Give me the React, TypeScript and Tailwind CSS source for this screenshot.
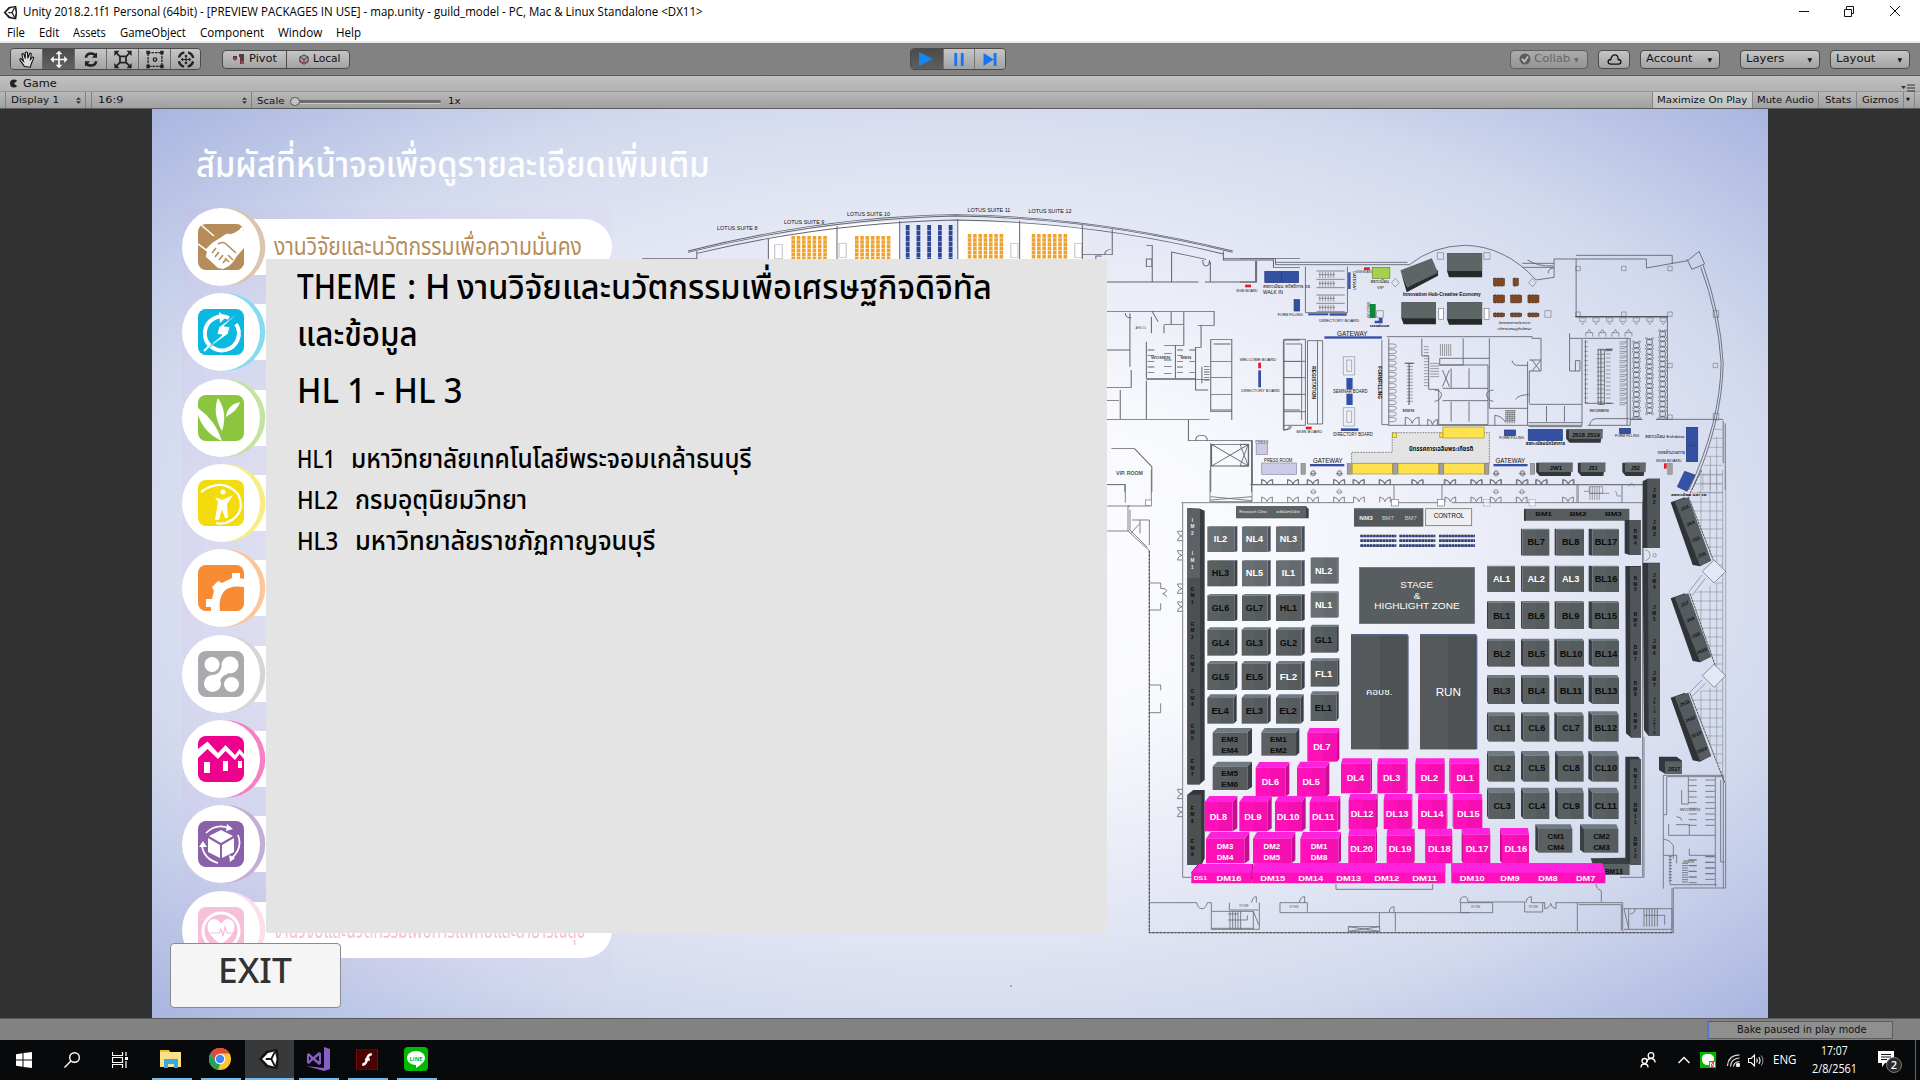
import React, { useLayoutEffect, useRef, useState } from "react";

/* Text squeezed or stretched to a given width. */
function Fit({ w, className = "", children }: { w: number; className?: string; children: string }) {
  const ref = useRef<HTMLSpanElement>(null);
  const [k, setK] = useState(1);
  useLayoutEffect(() => {
    if (ref.current && ref.current.offsetWidth) setK(w / ref.current.offsetWidth);
  }, [w, children]);
  return (
    <span className={"inline-block shrink-0 text-left " + className} style={{ width: w }}>
      <span ref={ref} className="inline-block origin-left whitespace-pre" style={{ transform: `scaleX(${k})` }}>
        {children}
      </span>
    </span>
  );
}

const UnityMark = ({ className, dark = "#222", light = "#fff" }: { className: string; dark?: string; light?: string }) => (
  <svg viewBox="0 0 24 24" className={className}>
    <path d="M1 12 L9 3 L21 1 Q24 12 21 23 L9 21 Z" fill={dark} />
    <path d="M4.500 12L11 5.500L18.500 3.500L20.300 12L18.500 20.500L11 18.500Z" fill={light} />
    <path d="M8.500 12h6M14.500 12l4-8M14.500 12l4 8" stroke={dark} strokeWidth="2" />
  </svg>
);

const MENU: [string, number, string][] = [
  ["File", 18, "w-[32px]"], ["Edit", 20, "w-[34px]"], ["Assets", 33, "w-[47px]"], ["GameObject", 66, "w-[80px]"],
  ["Component", 64, "w-[78px]"], ["Window", 44, "w-[58px]"], ["Help", 25, "w-[40px]"],
];

function TitleBar() {
  return (
    <div className="flex h-[43px] shrink-0 flex-col border-b-2 border-[#e9ecec] bg-white font-['Open_Sans',sans-serif] text-[12px] text-black">
      <div className="flex h-[24px] shrink-0 items-center">
        <UnityMark className="ml-[3px] mr-[5px] h-[15px] w-[15px]" />
        <Fit w={680}>{"Unity 2018.2.1f1 Personal (64bit) - [PREVIEW PACKAGES IN USE] - map.unity - guild_model - PC, Mac & Linux Standalone <DX11>"}</Fit>
        <svg viewBox="0 0 110 20" className="ml-auto mr-5 h-5 w-[110px]" fill="none" stroke="#111">
          <path d="M9 9.500h10M54.500 7.500h7v7h-7zM56.500 7v-2.500h7v7h-2.500M100 4l10 10M110 4l-10 10" />
        </svg>
      </div>
      <div className="flex h-[18px] shrink-0 items-center pl-[7px]">
        {MENU.map(([t, w, c]) => (
          <div key={t} className={"shrink-0 " + c}><Fit w={w}>{t}</Fit></div>
        ))}
      </div>
    </div>
  );
}

const BTN = "flex items-center border border-[#4b4b4b] bg-linear-to-b from-[#c6c6c6] to-[#a2a2a2]";

const TOOLS = [
  <path key="0" d="M8 19 L3 12 Q2 10 4 10 L7 13 L5 5 Q6 3 7.500 5 L9 10 L9 3 Q10 1.500 11.500 3 L12 9.500 L14 4 Q15.500 3 16 4.500 L15 11 L17.500 8 Q19 8 18.500 10 L15.500 17 L15 20Z" fill="#ddd" stroke="#111" strokeWidth="1.200" />,
  <path key="1" d="M11 1l4 4h-3v5h5V7l4 4-4 4v-3h-5v5h3l-4 4-4-4h3v-5H5v3l-4-4 4-4v3h5V5H7z" fill="#f5f5f5" />,
  <g key="2" fill="none" stroke="#222" strokeWidth="3"><path d="M5 9q1-5 6-5 4 0 6 3M17 13q-1 5-6 5-4 0-6-3" /><path d="M18 3v6h-6zM4 19v-6h6z" fill="#222" stroke="none" /></g>,
  <g key="3" stroke="#222" fill="none" strokeWidth="2"><path d="M7.500 7.500h7v7h-7zM7 7L3 3M15 7l4-4M7 15l-4 4M15 15l4 4" /><path d="M1 1h6L1 7zM21 1h-6l6 6zM1 21h6l-6-6zM21 21h-6l6-6z" fill="#222" stroke="none" /></g>,
  <g key="4" stroke="#222" fill="none" strokeWidth="1.500"><path d="M3 3h16v16H3z" strokeDasharray="3 1" /><circle cx="11" cy="11" r="2" /><path d="M1 1h4v4H1zM17 1h4v4h-4zM1 17h4v4H1zM17 17h4v4h-4z" fill="#222" stroke="none" /></g>,
  <g key="5" stroke="#222" fill="none"><circle cx="11" cy="11" r="8.500" strokeWidth="2.800" strokeDasharray="9 4.350" strokeDashoffset="-2.200" /><path d="M11 6v10M6 11h10M9.500 7.500L11 6l1.500 1.500M9.500 14.500L11 16l1.500-1.500M7.500 9.500L6 11l1.500 1.500M14.500 9.500L16 11l-1.500 1.500" strokeWidth="1.300" /></g>,
];

function Toolbar() {
  return (
    <div className="flex h-[33px] shrink-0 items-center border-b border-[#5c5c5c] bg-[#828282] font-['DejaVu_Sans',sans-serif] text-[11px] text-[#111]">
      <div className="ml-[10px] flex h-[22px] overflow-hidden rounded border border-[#4b4b4b]">
        {TOOLS.map((t, i) => (
          <div key={i} className={"flex w-8 items-center justify-center border-r border-[#6a6a6a] last:w-[29px] last:border-0 " + (i === 1 ? "bg-linear-to-b from-[#4b4b4b] to-[#626262]" : "bg-linear-to-b from-[#c6c6c6] to-[#a2a2a2]")}>
            <svg viewBox="0 0 22 22" className="h-[19px] w-[20px]">{t}</svg>
          </div>
        ))}
      </div>
      <div className={BTN + " ml-[21px] h-[19px] w-[65px] rounded-l pl-[10px]"}>
        <svg viewBox="0 0 12 12" className="mr-1 h-3 w-3"><path d="M0 3h4v3l-2 2-2-2zM6 1h5v10H7V4H6z" fill="#5b3b42" /><path d="M1 5h2v2H1zM8 8h3v3H8z" fill="#c33" /></svg>
        <Fit w={28}>Pivot</Fit>
      </div>
      <div className={BTN + " -ml-px h-[19px] w-[64px] rounded-r pl-[12px]"}>
        <svg viewBox="0 0 12 12" className="mr-1 h-[11px] w-[10px]"><path d="M6 .5l5 2.500v6l-5 2.500-5-2.500V3zM1 3l5 2.500L11 3M6 5.500v6" fill="#999" stroke="#333" /><path d="M1 8l5 3 5-3" fill="none" stroke="#b33" strokeWidth="1.500" /></svg>
        <Fit w={28}>Local</Fit>
      </div>
      <div className="ml-[560px] flex h-[22px] overflow-hidden rounded border border-[#4b4b4b]">
        <div className="flex w-8 items-center justify-center bg-linear-to-b from-[#4b4b4b] to-[#5f5f5f] pr-[2px]"><svg viewBox="0 0 16 14" className="h-[14px] w-4"><path d="M1 0l14 7-14 7z" fill="#1686f5" /></svg></div>
        <div className="flex w-8 items-center justify-center border-x border-[#777] bg-linear-to-b from-[#c6c6c6] to-[#a2a2a2] pr-px"><svg viewBox="0 0 12 14" className="h-[13px] w-3"><path d="M1 0h3v14H1zM8 0h3v14H8z" fill="#1673f5" /></svg></div>
        <div className="flex w-[30px] items-center justify-center bg-linear-to-b from-[#c6c6c6] to-[#a2a2a2]"><svg viewBox="0 0 14 14" className="h-[13px] w-[14px]"><path d="M0 0l11 7-11 7zM11 0h3v14h-3z" fill="#1673f5" /></svg></div>
      </div>
      <div className="ml-auto mr-[10px] flex">
        <div className={BTN + " h-[19px] w-[78px] rounded pl-[8px] text-[#555] opacity-60"}>
          <svg viewBox="0 0 12 12" className="mr-[3px] h-3 w-3"><circle cx="6" cy="6" r="5.500" fill="#444" /><path d="M3 6l2.500 2.500L9 3.500" fill="none" stroke="#eee" strokeWidth="1.800" /></svg>
          <Fit w={36}>Collab</Fit><span className="ml-[4px] text-[6px]">▼</span>
        </div>
        <div className={BTN + " ml-[10px] h-[19px] w-8 justify-center rounded"}><svg viewBox="0 0 16 12" className="h-[11px] w-[15px]"><path d="M4 11Q1 11 1 8.500T4 6Q5 1 8.500 1T12 6Q15 6 15 8.500T12 11z" fill="none" stroke="#111" strokeWidth="1.400" /></svg></div>
        {([["Account", 46, "ml-[10px]"], ["Layers", 38, "ml-[20px]"], ["Layout", 39, "ml-[10px]"]] as [string, number, string][]).map(([t, w, c]) => (
          <div key={t} className={BTN + " h-[19px] w-20 justify-between rounded pl-[5px] pr-[7px] " + c}><Fit w={w}>{t}</Fit><span className="text-[6px]">▼</span></div>
        ))}
      </div>
    </div>
  );
}

const Updown = () => <svg viewBox="0 0 6 8" className="h-[7px] w-[5px]"><path d="M3 0l3 3H0zM3 8L0 5h6z" fill="#333" /></svg>;

function GameTabs() {
  return (
    <div className="shrink-0 font-['DejaVu_Sans',sans-serif] text-[#111]">
      <div className="flex h-4 items-center border-b border-[#989898] bg-linear-to-b from-[#c0c0c0] to-[#b2b2b2] pl-[10px] text-[11px]">
        <svg viewBox="0 0 10 10" className="mr-[5px] h-[9px] w-2"><path d="M9 1.500L5 5l4 3.500Q7 10 5 10A5 5 0 0 1 5 0Q7 0 9 1.500z" fill="#222" /></svg>
        <Fit w={34} className="mt-[2px]">Game</Fit>
        <svg viewBox="0 0 14 8" className="ml-auto mr-[5px] mt-2 h-2 w-[14px]"><path d="M0 2h5L2.500 5zM6 .5h8v1H6zM6 3.500h8v1H6zM6 6.500h8v1H6z" fill="#333" /></svg>
      </div>
      <div className="flex h-[17px] items-center border-b border-[#5c5c5c] bg-linear-to-b from-[#b8b8b8] to-[#a0a0a0] text-[9.500px]">
        <div className="ml-[5px] flex h-full w-[81px] items-center justify-between border-x border-[#808080] px-[5px] pr-[4px]"><Fit w={48}>Display 1</Fit><Updown /></div>
        <div className="ml-[5px] flex h-full w-[161px] items-center justify-between border-x border-[#808080] pl-[6px] pr-[4px]"><Fit w={25}>16:9</Fit><Updown /></div>
        <Fit w={28} className="ml-[5px] mt-[3px]">Scale</Fit>
        <div className="ml-[5px] mt-[3px] h-[9px] w-[10px] rounded-full border border-[#555] bg-[#c4c4c4]" />
        <div className="mt-[3px] h-1 w-[141px] rounded-r border-b border-[#ccc] bg-[#6c6c6c]" />
        <Fit w={13} className="ml-[7px] mt-[3px]">1x</Fit>
        <div className="ml-auto flex h-full items-center">
          <div className="flex h-full w-[101px] items-center border-x border-[#858585] bg-linear-to-b from-[#d0d0d0] to-[#c0c0c0] pl-1"><Fit w={90}>Maximize On Play</Fit></div>
          <div className="flex h-full w-[66px] items-center border-r border-[#858585] pl-[4px]"><Fit w={57}>Mute Audio</Fit></div>
          <div className="flex h-full w-[38px] items-center border-r border-[#858585] pl-[6px]"><Fit w={26}>Stats</Fit></div>
          <div className="flex h-full w-[47px] items-center border-r border-[#858585] pl-[5px]"><Fit w={37}>Gizmos</Fit></div>
          <div className="mr-[5px] flex h-full w-[11px] items-center border-r border-[#858585] pl-[2px] text-[5px]">▼</div>
        </div>
      </div>
    </div>
  );
}

/* ---- Floor plan ---- */

type LabelProps = { x: number; y: number; w: number; s?: number; f?: string; b?: boolean; children: string; rot?: number };
const L = ({ x, y, w, s = 20, f = "#111", b = false, rot, children }: LabelProps) => (
  <text x={x} y={y} fontSize={s} fill={f} textAnchor="middle" textLength={w} lengthAdjust="spacingAndGlyphs" fontWeight={b ? 700 : 400}
    transform={rot ? `rotate(${rot} ${x} ${y})` : undefined}>{children}</text>
);

/* A booth block: front face, a lid of height t, and a side face of width |d| (right when positive). */
type BoothT = [label: string, x0: number, y0: number, x1: number, y1: number, tone: string, t?: number, d?: number];
const FRONT: Record<string, string> = { k: "#5a5f62", w: "#5a5f62", l: "#6a6f73", p: "#ff10b8" };
const LID: Record<string, string> = { k: "#6f7b83", w: "#6f7b83", l: "#757c84", p: "#ff22dc" };
const SIDE: Record<string, string> = { k: "#3a3f46", w: "#3a3f46", l: "#464c5e", p: "#c80c94" };
const textWidth = (s: string) => (s.length === 4 ? 68 : 72);
function Booth({ v }: { v: BoothT }) {
  const [label, x0, y0, x1, y1, c, t = 5, d = 9] = v;
  const fx0 = d < 0 ? x0 - d : x0;
  const fx1 = d > 0 ? x1 - d : x1;
  const fy = y0 + t;
  const lines = label.split("/");
  const big = lines.length === 1;
  const cx = (fx0 + fx1) / 2 - (d > 0 ? 1 : -1);
  const cy = (fy + y1) / 2;
  return (
    <g>
      {d > 0
        ? <path d={`M${fx1} ${fy}L${x1} ${y0}V${y1 - Math.min(t, 9)}L${fx1} ${y1}z`} fill={SIDE[c]} />
        : <path d={`M${fx0} ${fy}L${x0} ${y0}V${y1 - Math.min(t, 9)}L${fx0} ${y1}z`} fill={SIDE[c]} />}
      <path d={d > 0 ? `M${x0} ${fy}L${x0 + d} ${y0}H${x1}L${fx1} ${fy}z` : `M${fx0} ${fy}L${x0} ${y0}H${x1 + d / 2}L${x1} ${fy}z`} fill={LID[c]} />
      <rect x={fx0} y={fy} width={fx1 - fx0} height={y1 - fy} fill={FRONT[c]} />
      <rect x={(fx0 + fx1) / 2} y={fy} width={(fx1 - fx0) / 2} height={y1 - fy} fill="#000" opacity=".04" />
      {lines.map((s, i) => (
        <text key={s} x={cx} y={big ? cy + 9 : cy - 6 + i * 33} fontSize={big ? 27 : 20} fontWeight="700" textAnchor="middle"
          textLength={!big ? 50 : s.length === 3 ? (s[0] === "I" ? 40 : 52) : textWidth(s)} lengthAdjust="spacingAndGlyphs"
          fill={c === "k" ? "#0c0c0c" : "#fff"}>{s}</text>
      ))}
    </g>
  );
}

const NW: BoothT[] = [
  ["IL2", 322, 168, 412, 246, "l", 2], ["NL4", 426, 168, 512, 246, "l", 2], ["NL3", 528, 168, 614, 246, "l", 2],
  ["HL3", 322, 270, 412, 349, "k", 2], ["NL5", 426, 270, 512, 349, "l", 2], ["IL1", 528, 270, 614, 349, "l", 2],
  ["NL2", 632, 262, 716, 341, "l", 2, 4], ["NL1", 632, 364, 716, 443, "l", 3, 4],
  ["GL6", 322, 372, 412, 453, "k", 4], ["GL7", 426, 372, 512, 453, "k", 4], ["HL1", 528, 372, 614, 453, "k", 4],
  ["GL4", 322, 472, 412, 557, "k", 7], ["GL3", 425, 472, 512, 557, "k", 7], ["GL2", 528, 472, 614, 557, "k", 7], ["GL1", 632, 464, 716, 548, "k", 7, 5],
  ["GL5", 322, 573, 412, 660, "k", 8], ["EL5", 425, 573, 512, 660, "k", 8], ["FL2", 528, 573, 614, 660, "w", 8], ["FL1", 632, 565, 718, 650, "w", 7, 6],
  ["EL4", 322, 673, 410, 761, "k", 11], ["EL3", 425, 673, 512, 761, "k", 11], ["EL2", 528, 673, 611, 761, "k", 11], ["EL1", 632, 664, 716, 753, "k", 9, 6],
];
const SW: BoothT[] = [
  ["EM3/EM4", 338, 54, 456, 137, "k", 13, 14], ["EM1/EM2", 484, 54, 598, 137, "k", 13, 10], ["EM5/EM6", 338, 155, 456, 240, "k", 14, 14],
  ["DL7", 622, 54, 718, 155, "p", 14, 7], ["DL6", 467, 156, 568, 260, "p", 17, 11], ["DL5", 591, 155, 688, 260, "p", 17, 10],
  ["DL4", 723, 145, 816, 250, "p", 16, 5], ["DL3", 832, 145, 923, 250, "p", 16, 3], ["DL2", 946, 145, 1034, 250, "p", 16, 2], ["DL1", 1048, 145, 1138, 250, "p", 16, -3],
  ["DL8", 314, 258, 412, 364, "p", 18, 14], ["DL9", 418, 258, 515, 364, "p", 18, 13], ["DL10", 525, 258, 617, 364, "p", 18, 11], ["DL11", 629, 258, 721, 364, "p", 18, 8],
  ["DL12", 746, 252, 833, 357, "p", 18, 5], ["DL13", 851, 252, 937, 357, "p", 18, 3], ["DL14", 954, 252, 1042, 357, "p", 18, 2], ["DL15", 1058, 252, 1147, 357, "p", 18, -3],
  ["DM3/DM4", 318, 366, 448, 460, "p", 20, 14], ["DM2/DM5", 459, 366, 586, 460, "p", 20, 12], ["DM1/DM8", 601, 366, 723, 460, "p", 20, 8],
  ["DL20", 745, 356, 831, 460, "p", 20, 4], ["DL19", 860, 356, 944, 460, "p", 20, 2], ["DL18", 975, 356, 1057, 460, "p", 20, -2], ["DL17", 1085, 354, 1171, 460, "p", 20, -4], ["DL16", 1200, 354, 1287, 460, "p", 20, -6],
];
const NE: BoothT[] = [
  ["BL7", 243, 176, 328, 257, "k", 2, -4], ["BL8", 344, 176, 432, 257, "k", 2, -6], ["BL17", 446, 176, 537, 257, "k", 2, -11],
  ["AL1", 141, 287, 225, 366, "w", 2, -2], ["AL2", 243, 287, 328, 366, "w", 2, -4], ["AL3", 344, 287, 432, 366, "w", 2, -6], ["BL16", 446, 287, 537, 366, "k", 2, -11],
  ["BL1", 141, 393, 225, 477, "k", 4, -3], ["BL6", 243, 393, 328, 477, "k", 4, -5], ["BL9", 344, 393, 432, 477, "k", 4, -6], ["BL15", 446, 393, 537, 477, "k", 4, -10],
  ["BL2", 141, 506, 225, 590, "k", 7, -3], ["BL5", 243, 506, 328, 590, "k", 7, -6], ["BL10", 343, 506, 432, 590, "k", 7, -9], ["BL14", 446, 506, 537, 590, "k", 7, -12],
  ["BL3", 141, 615, 225, 702, "k", 9, -3], ["BL4", 243, 615, 328, 702, "k", 9, -6], ["BL11", 343, 615, 432, 702, "k", 9, -9], ["BL13", 446, 615, 537, 702, "k", 9, -12],
];
const SE: BoothT[] = [
  ["CL1", 141, 7, 225, 95, "k", 9, -5], ["CL6", 243, 7, 328, 95, "k", 9, -8], ["CL7", 343, 7, 431, 95, "k", 9, -10], ["BL12", 445, 4, 536, 95, "k", 10, -12],
  ["CL2", 141, 123, 225, 215, "k", 13, -5], ["CL5", 243, 123, 328, 215, "k", 13, -8], ["CL8", 345, 123, 431, 215, "k", 13, -9], ["CL10", 445, 123, 536, 215, "k", 13, -12],
  ["CL3", 141, 233, 225, 327, "k", 14, -5], ["CL4", 243, 233, 328, 327, "k", 14, -8], ["CL9", 345, 233, 431, 327, "k", 14, -9], ["CL11", 445, 233, 536, 327, "k", 14, -12],
  ["CM1/CM4", 286, 343, 397, 428, "k", 14, -10], ["CM2/CM3", 420, 343, 535, 428, "k", 14, -12],
];

const VLabel = ({ x, y, t, step = 21, s = 14, f = "#0c0c0c" }: { x: number; y: number; t: string; step?: number; s?: number; f?: string }) => (
  <>{t.split("").map((c, i) => <text key={i} x={x} y={y + i * step} fontSize={s} fontWeight="700" textAnchor="middle" fill={f}>{c}</text>)}</>
);

const range = (n: number) => Array.from({ length: n }, (_, i) => i);

const Doors = ({ x, y }: { x: number; y: number }) => (
  <path d={`M${x - 17} ${y}v-16q14 2 16 14q2-12 16-14v16`} fill="none" />
);

/* North side, west half: the suites behind the dialog and the VIP rooms. */
function SuitesPlan() {
  return (
    <g transform="translate(640 190) scale(.4209 .33333)">
      <path d="M305 145Q380 118 466 108Q540 96 617 93V210H305zM755 93Q900 95 1051 113V210H755z" fill="#fff" />
      <g fill="none" stroke="#62656f" strokeWidth="2.400">
        <path d="M114 187Q440 85 750 78Q1080 84 1408 187M114 183Q440 79 750 74Q1080 80 1408 183M135 190Q440 98 750 90Q1080 96 1386 192M5 206H135V184M305 145V210M468 108V210M617 93V210M755 88V210M902 92V210M1051 106V210" />
        <path d="M1051 194H1122V118M1104 194q0-14 14-16M1083 210v-12h14M1203 166h14v110M1203 207h13v23h-13zM1108 276H1327M1342 276H1465V213M1263 276V186L1345 208M1337 210q0 18 8 18t8-18M1355 215V276M1386 184V210H1505V232H1568M1386 205H1568M1108 364H1364V406H1325M1164 370V530M1153 370q0 14 14 14M1245 406V430M1262 366v38H1292V366M1245 404h48M1333 406V472M1292 406V466H1245M1215 430V380M1217 365l14 30M1203 455V565H1320V472h14M1203 569H1353M1108 480H1164M1108 592H1167V540M1141 600V688M1203 572V688M1108 688H1353M1320 565V600H1350M1272 466V565M1108 632h30M1120 776H1175L1216 830V905M1108 884H1152V905M1303 690V752H1453V905M1356 760V905M1358 763h88v65h-88zM1358 763l88 65M1446 763l-88 65M1450 884H1568M1320 752q0-16 14-16q14 0 14 16M1356 448h50v242M1356 448V665H1406M1363 462h40M1356 514h50M1356 563h50M1356 613h50M1356 660h50M1530 450h38M1530 450V720q20-2 16-12M1530 514h38M1530 563h38M1530 613h38M1530 660h38" />
        <path d="M1335 530v50M1340 530h13M1340 538h13M1340 546h13M1340 554h13M1340 562h13M1340 570h13M1206 480h16M1206 497h16M1206 514h16M1206 531h16M1206 548h16M1245 490h18M1245 510h18M1245 530h18M1245 550h18M1276 480h14M1276 497h14M1276 514h14M1276 531h14M1276 548h14M1305 480h14M1305 514h14M1305 548h14" />
        <rect x="320" y="164" width="18" height="42" opacity=".4" /><rect x="473" y="160" width="17" height="42" opacity=".4" /><rect x="881" y="160" width="17" height="42" opacity=".4" /><rect x="1033" y="160" width="17" height="42" opacity=".4" />
      </g>
      <g stroke="#f0a12c" strokeWidth="8.500" strokeDasharray="11 1.500">
        {[364, 515, 783, 935].map((x) => range(7).map((i) => <path key={x + i} d={`M${x + i * 12.600} ${x < 600 ? 138 : 132}V208`} />))}
      </g>
      <g stroke="#2c4796" strokeWidth="9" strokeDasharray="15 1.500">{range(5).map((i) => <path key={i} d={`M${636 + i * 25.500} 105V208`} />)}</g>
      <L x={231} y={121} w={96} s={18}>LOTUS SUITE 8</L><L x={390} y={103} w={96} s={18}>LOTUS SUITE 9</L><L x={543} y={79} w={102} s={18}>LOTUS SUITE 10</L>
      <L x={829} y={67} w={102} s={18}>LOTUS SUITE 11</L><L x={974} y={68} w={102} s={18}>LOTUS SUITE 12</L>
      <L x={1163} y={854} w={64} s={14} b f="#555">VIP. ROOM</L>
      <L x={1237} y={506} w={46} s={13} b f="#555">WOMEN</L><L x={1297} y={506} w={26} s={13} b f="#555">MEN</L>
      <L x={1190} y={418} w={26} s={8} f="#555">AHU 01</L>
    </g>
  );
}

/* North side, east half: foyer, registration, gateways and the restaurant. */
function FoyerPlan() {
  const blue = "#3450a3";
  return (
    <g transform="translate(1240 190) scale(.3444 .33333)">
      <g fill="none" stroke="#62656f" strokeWidth="2.600">
        <path d="M0 206H103V224H492Q560 168 652 166Q770 168 860 270L912 262V207H1180V234L1300 212L1333 184L1349 222L1312 238L1298 208M103 217H486M820 220H912M820 232H912M1345 226Q1395 370 1403 520Q1400 700 1312 900M1338 232Q1388 370 1397 520Q1394 700 1303 900M976 207V380H1241V688H1403M976 196H1255V222" />
        <path d="M45 213V276H0M190 230V368H312V230M126 450V720q20-2 16-12M126 448H190V706H126M133 462h46V690M126 514h64M126 563h64M126 613h64M126 665h64M196 452h44V702H196zM225 452V702M412 450V704H432V445M426 440H848V445H874V543H840V640M840 510H874M848 510l24 33M874 510l-26 33M430 706H835M528 445V498H548V598H577V704M724 445V655H835M724 505H580V525H648V445M577 525H720V704H577M588 595H720M588 632H720M613 535V595M665 535V595M613 635V695M665 635V695M588 540l20 50M608 540l-20 50M835 515V706H993V445H957M957 430V543H987V512h-13v31M840 643H993M890 648V695M942 648V695M838 698H993M838 710H993M995 445H1133V706H1010M1003 450V640H1085M1040 478h18v165h-18zM1060 478h20v4h-20M1124 445V706M1403 692V820M1409 700V900" />
        <path d="M565 600q20 2 20 14q-2 18-20 20M736 600q-20 2-20 14q2 18 20 20M790 512q4 16 20 14h26M800 628q10-14 38-14M480 706v-24q16 2 20 18q4-16 20-18v24M545 706v-18q12 2 14 16q2-14 14-16v18M740 706v-30q20 2 30 20M1015 706q4-20 20-20h96" />
        <path d="M300 500h33v55h-33zM310 510h14v34h-14zM300 653h33v55h-33zM310 663h14v34h-14z" opacity=".5" />
        <path d="M573 188h18v20h-18zM708 188h18v20h-18zM396 362h20v20h-20zM885 362h18v20h-18zM1108 229h13v13h-13zM975 229h13v13h-13zM1242 229h13v13h-13zM975 366h13v13h-13zM1108 366h13v13h-13zM1242 366h13v13h-13zM1374 362h16v20h-16zM1242 520h13v13h-13zM1374 520h13v13h-13zM1242 675h13v13h-13zM1374 670h16v20h-16zM451 265l11 13-11 13-11-13zM849 265l11 13-11 13-11-13z" opacity=".6" />
        <path d="M36 884H1170M0 752H36V884M0 763h24v65H0M0 763l24 65M24 763l-24 65M835 210q30 20 74 18M895 250q0-14 14-16" />
        {[80, 155, 212, 289, 345, 421, 516, 610, 688, 744, 821, 877, 955].map((x) => <Doors key={x} x={x} y={885} />)}
        {[212, 289, 744, 821].map((x) => <path key={x} d={`M${x - 9} 852h18M${x - 6} 852q0-10 6-10t6 10q0 6-6 6t-6-6`} opacity=".7" />)}
      </g>
      {/* staircases and sanitary rows */}
      <g stroke="#555" strokeWidth="1.600" fill="none">
        {[243, 268, 293, 315, 340, 365].map((y) => <path key={y} d={`M222 ${y}h82`} strokeWidth="3" stroke="#888" />)}
        {[254, 280, 325, 352].map((y) => <path key={y} d={`M228 ${y}h48M232 ${y - 8}v18M240 ${y - 8}v18M248 ${y - 8}v18M256 ${y - 8}v18M264 ${y - 8}v18M272 ${y - 8}v18`} />)}
        {range(14).map((i) => <path key={i} d={`M432 ${462 + i * 17}h12q10 0 10 6t-10 6h-12M534 ${470 + i * 9}h14M1000 ${456 + i * 14}h10M1102 ${456 + i * 14}h20l-6 6h-14`} />)}
        {range(13).map((i) => <path key={i} d={`M484 ${520 + i * 9.500}h18M1036 ${480 + i * 13}h22M1062 ${480 + i * 12}h14`} />)}
        <path d="M491 520V645M1048 478V645M478 520h28M1062 478h20M1062 640h16" strokeWidth="3" />
        {range(6).map((i) => <path key={i} d={`M${582 + i * 6} 462v36M552 ${520 + i * 8}h26M770 ${662 + i * 6}h30M${772 + i * 5} 660v40`} />)}
        {range(7).map((i) => <path key={i} d={`M${986 + i * 39} 384h18v10h-18zM${990 + i * 39} 396l5 8 5-8M974 380H1242`} opacity=".8" />)}
        {range(4).map((i) => <path key={i} d={`M${1004 + i * 38} 440v-12h20v12M${1008 + i * 38} 428l6-10 6 10`} />)}
      </g>
      <g stroke="#444" strokeWidth="1.900" fill="none">
        {([[1138, 466, 29.5, 8], [1176, 456, 29.3, 8], [1214, 432, 30, 9]] as number[][]).map(([x, y0, step, n]) => range(n).map((i) => {
          const y = y0 + i * step;
          return <path key={x + "-" + i} d={`M${x} ${y - 9}l5-4l4 4h8l4-4l5 4M${x} ${y + 9}l5 4l4-4h8l4 4l5-4M${x + 5} ${y - 7}h16v14h-16z`} />;
        }))}
        <path d="M1134 688h34M1208 688h34" strokeWidth="3" />
      </g>
      {/* glazed terrace grid */}
      <g stroke="#888" strokeWidth="1.600">
        {range(8).map((i) => <path key={i} d={`M${1376 - i * 7} ${718 + i * 27}H1401`} />)}
        <path d="M1384 740V900M1366 800V900M1344 850V900" />
      </g>
      <g fill={blue} stroke="#22357a" strokeWidth="2">
        <rect x="72" y="244" width="48" height="34" /><rect x="121" y="244" width="49" height="34" /><rect x="157" y="329" width="16" height="34" />
        <rect x="314" y="247" width="7" height="50" stroke="none" /><rect x="260" y="370" width="50" height="7" stroke="none" /><rect x="198" y="370" width="58" height="6" stroke="none" />
        <path d="M391 392h12v-8h11v16h-23z" stroke="none" /><rect x="245" y="439" width="167" height="7" stroke="none" />
        <rect x="309" y="564" width="18" height="34" stroke="none" /><rect x="309" y="611" width="18" height="34" stroke="none" /><rect x="293" y="715" width="51" height="8" stroke="none" />
        <rect x="53" y="541" width="8" height="51" stroke="none" /><rect x="203" y="822" width="100" height="7" stroke="none" /><rect x="736" y="822" width="99" height="7" stroke="none" />
        <rect x="768" y="720" width="32" height="17" /><rect x="837" y="718" width="49" height="34" /><rect x="888" y="718" width="48" height="34" /><rect x="1102" y="715" width="32" height="16" />
        <rect x="1296" y="712" width="33" height="51" /><rect x="1296" y="765" width="33" height="50" />
      </g>
      <g fill="#e31b23"><rect x="360" y="232" width="17" height="8" /><rect x="15" y="284" width="17" height="8" /><rect x="53" y="518" width="8" height="17" /><rect x="191" y="710" width="17" height="8" /><rect x="1231" y="820" width="8" height="16" /></g>
      <rect x="384" y="232" width="51" height="33" fill="#a5cf4c" stroke="#62832a" strokeWidth="2" /><rect x="377" y="342" width="17" height="42" fill="#11873d" />
      <g fill="#cdcae6" stroke="#8a88a8" strokeWidth="2"><rect x="47" y="760" width="33" height="34" /><rect x="63" y="819" width="101" height="34" /></g>
      <path d="M442 728H724V820H324V787H442z" fill="#e3e3e3" stroke="#555" strokeWidth="2" strokeDasharray="5 3" />
      <g fill="#fde14e" stroke="#b2941c" strokeWidth="2"><rect x="589" y="711" width="120" height="33" /><rect x="326" y="820" width="117" height="32" /><rect x="459" y="820" width="118" height="32" /><rect x="591" y="820" width="119" height="32" /><rect x="443" y="729" width="12" height="13" /><rect x="580" y="729" width="9" height="13" /></g>
      <g fill="#a0a0a4" stroke="#555" strokeWidth="1"><rect x="311" y="820" width="13" height="33" /><rect x="444" y="820" width="14" height="33" /><rect x="578" y="820" width="12" height="33" /><rect x="711" y="820" width="12" height="33" /><rect x="177" y="820" width="13" height="33" /><rect x="843" y="820" width="13" height="33" /><rect x="1242" y="820" width="13" height="33" /></g>
      {/* hub blocks */}
      <path d="M466 241L486 292L575 240V257L484 307z" fill="#272b2d" /><path d="M466 241L557 205L575 248L486 292z" fill="#5d6565" />
      {[[601, 190, 703, 243, 262], [469, 337, 569, 385, 403], [601, 337, 703, 387, 404]].map(([a, b, c, d, e]) => (
        <g key={a + "-" + b}><path d={`M${a} ${b}H${c}V${e}H${a + 6}L${a} ${d}z`} fill="#26292a" /><rect x={a} y={b} width={c - a} height={d - b} fill="#5d6565" /></g>
      ))}
      <g fill="#fff" stroke="#777" strokeWidth="2"><rect x="577" y="356" width="14" height="33" /><rect x="709" y="356" width="14" height="33" /></g>
      {[[736, 266, 32], [793, 266, 15], [736, 316, 32], [786, 316, 32], [836, 316, 32], [736, 370, 32], [786, 370, 32], [836, 370, 32]].map(([x, y, w]) => {
        const h = y === 370 ? 9 : 21;
        return <g key={x + "-" + y}><path d={`M${x + 2} ${y - 1}h${w - 4}M${x + 2} ${y + h + 1}h${w - 4}`} stroke="#444" strokeWidth="3" strokeDasharray="6 3" /><rect x={x} y={y} width={w} height={h} fill="#84471d" stroke="#3f2110" strokeWidth="1.500" /></g>;
      })}
      {/* JS and JW blocks */}
      {([[947, 718, 1053, 758, "JS18 JS19", 82], [860, 818, 966, 858, "JW1", 36], [981, 818, 1061, 858, "JS1", 26], [1110, 818, 1178, 858, "JS2", 26]] as [number, number, number, number, string, number][]).map(([a, b, c, d, t, w]) => (
        <g key={t}><path d={`M${a} ${b}H${c}L${c - 6} ${d}H${a + 10}L${a} ${d - 12}z`} fill="#33373a" /><path d={`M${a + 8} ${b}H${c}V${d - 12}H${a + 8}z`} fill="#63686a" /><L x={(a + c) / 2 + 4} y={d - 17} w={w} s={17} f="#0c0c0c" b>{t}</L></g>
      ))}
      <L x={586} y={318} w={226} s={15} b>Innovation Hub-Creative Economy</L>
      <L x={326} y={437} w={88} s={20}>GATEWAY</L><L x={255} y={819} w={86} s={20}>GATEWAY</L><L x={785} y={819} w={86} s={20}>GATEWAY</L>
      <L x={288} y={396} w={116} s={13}>DIRECTORY BOARD</L><L x={328} y={737} w={114} s={14}>DIRECTORY BOARD</L><L x={60} y={606} w={112} s={13}>DIRECTORY BOARD</L>
      <L x={52} y={513} w={106} s={13}>WELCOME BOARD</L><L x={320} y={610} w={100} s={14}>SEMINAR BOARD</L>
      <L x={201} y={729} w={76} s={13}>SIGN BOARD</L><L x={1245} y={816} w={74} s={13}>SIGN BOARD</L><L x={20} y={306} w={62} s={13}>SIGN BOARD</L><L x={360} y={248} w={46} s={9}>SIGN BOARD</L>
      <L x={146} y={377} w={72} s={12}>FORM FILLING</L><L x={789} y={747} w={72} s={12}>FORM FILLING</L><L x={1124} y={742} w={70} s={12}>FORM FILLING</L>
      <L x={111} y={815} w={82} s={14}>PRESS ROOM</L><L x={63} y={760} w={38} s={13}>PRESS</L>
      <L x={137} y={294} w={140} s={13}>ลงทะเบียน สวัสดิการ วช.</L><L x={96} y={311} w={58} s={15}>WALK IN</L>
      <L x={406} y={279} w={54} s={13}>ลงทะเบียน</L><L x={408} y={296} w={20} s={13}>VIP</L><L x={405} y={411} w={56} s={11} b>เจลแฟนเมด</L>
      <L x={797} y={403} w={92} s={12}>นิทรรศการประกวด</L><L x={797} y={421} w={98} s={12}>บริการเศรษฐกิจศึกษา</L>
      <L x={584} y={782} w={186} s={19} b>นิทรรศการเฉลิมพระเกียรติ</L><L x={887} y={765} w={114} s={13} b>ลงทะเบียนนักวิชาการ</L>
      <L x={1234} y={745} w={116} s={13}>ลงทะเบียน Exhibitor</L><L x={1252} y={791} w={80} s={13}>กองอำนวยการ</L>
      <L x={209} y={578} w={98} s={14} b rot={90}>REGISTATION</L><L x={401} y={578} w={98} s={14} b rot={90}>FORMFILLING</L><L x={327} y={272} w={58} s={11} rot={90}>GATEWAY</L><L x={369} y={361} w={50} s={9} rot={90}>DIRECTORY</L>
      <L x={489} y={665} w={34} s={13} b f="#555">MEN</L><L x={1043} y={665} w={56} s={13} b f="#555">WOMEN</L>
    </g>
  );
}

/* Exhibition hall: walls, side strips and the numbered booths. */
function HallPlan() {
  return (
    <g transform="translate(1100 470) scale(.33333)">
      <g fill="none" stroke="#6d707a" strokeWidth="2.600">
        <path d="M22 44H76V98M22 108H90M84 108V183L148 242V1388H1720V1254H1877V940M154 0V108H84M22 183H86M90 120L90 180L142 232M96 150h52V225M120 150V190M92 190l28-30M330 0V95H456V0M332 90L456 80M332 80L456 92M245 98H761M248 98V1222H274M456 44H1628M882 44V98H1026V44M1055 98H1628M1431 44V98M1566 44V98M148 339h34v16M148 420h34V400M148 645h34v16M148 728h34V700M182 355q18 0 18 6t-12 10q12 4 12 10" />
        {[502, 580, 640, 718, 778, 856, 954, 1052, 1130, 1188, 1266, 1324, 1405].map((x) => <g key={x}><Doors x={x} y={45} />{x !== 954 && x !== 1324 && <Doors x={x} y={97} />}</g>)}
        {[640, 718, 1188, 1266].map((x) => <path key={x} d={`M${x - 10} 10h20M${x - 6} 10q0-8 6-8t6 8q0 6-6 6t-6-6M${x - 10} 66h20M${x - 6} 66q0-8 6-8t6 8q0 6-6 6t-6-6`} opacity=".7" />)}
        {[198, 256, 356, 410, 972, 1026].map((y) => <path key={y} d={`M248 ${y - 14}h-16q2 12 14 14q-12 2-14 14h16`} />)}
        <path d="M148 1298H290M322 1298H334V1378H478V1298M290 1298q4 18 16 18q12 0 16-18M334 1324H460V1378M334 1375H460M388 1298V1320H476M384 1350h58v-14M390 1324v54M398 1324v54M406 1324v54M414 1324v54M422 1324v54M384 1332h30M460 1324l16 40M540 1298V1328H1110M540 1298H622V1325M455 1298q2-18 14-18v18M598 1298q2-18 16-18v18M708 1242V1258H998V1242M745 1370h94v14h-94zM745 1370l94 14M839 1370l-94 14M838 1328V1370M886 1384V1328M868 1328q0-18 14-18v18M1082 1298V1328H1178V1298H1080M1080 1298q0-18 14-18q10 0 10 16h170v30h54v-28M1278 1298q2-18 16-18v18h40M1366 1298H1568M1334 1298v18q16-2 18-16q2 14 16 16v-18M1432 1298V1384M1436 1304H1564V1380M1568 1298V1384M1572 1316H1716V1378H1572M1586 1316V1378M1572 1316l14 60M1590 1332q14 0 16-16M1632 1316v54M1640 1316v54M1648 1316v54M1656 1316v54M1664 1316v54M1672 1316v54M1632 1336h62v28M1716 1254V1388M1488 1242q0 14 16 20v34" />
        <path d="M1690 916H1870V1256M1690 916V1256M1700 920V1034H1690M1700 920h166M1765 920V1002H1745V960M1846 920V1250M1706 1062V1096H1846M1728 1064h40V1096M1768 1136v20h78M1690 1106q20 4 30 20v40M1690 1156h40V1180M1710 1156V1244h140M1862 930V1176h12M1632 800V1222H1560M1628 94V1220M1730 1040q14 0 16 12" />
        {range(9).map((i) => <path key={i} d={`M1766 ${930 + i * 17}h24M1816 ${930 + i * 17}h28M1766 ${1170 + (i % 5) * 17}h24M1816 ${1160 + (i % 5) * 17}h28M1706 ${1160 + i * 9}h10M1746 ${1180 + i * 7}h18`} />)}
      </g>
      <path d="M148 242V1388H1720" fill="none" stroke="#555" strokeWidth="3.500" strokeDasharray="7 4" />
      <g fill="#fff" stroke="#777" strokeWidth="2"><rect x="136" y="90" width="19" height="17" /><rect x="875" y="88" width="20" height="20" /><rect x="1013" y="88" width="20" height="20" /><rect x="1150" y="88" width="20" height="20" opacity=".5" /><rect x="1287" y="88" width="20" height="20" opacity=".5" /></g>
      {/* terrace grid */}
      <clipPath id="terrace"><path d="M1805 0L1765 80L1840 280L1868 300L1868 330L1770 375L1845 590L1868 610V640L1770 675L1875 935V0z" /></clipPath>
      <g stroke="#9095a0" strokeWidth="2" fill="none" clipPath="url(#terrace)">
        {range(35).map((i) => <path key={i} d={`M1760 ${15 + i * 27}H1868`} />)}
        <path d="M1803 0V930M1830 0V930M1850 0V930" />
      </g>
      <path d="M1868 0V930M1877 0V940" stroke="#8a8d98" strokeWidth="2" />
      <g stroke="#555" strokeWidth="3" fill="none" strokeDasharray="8 2"><path d="M1805 0L1765 80L1840 270M1770 370L1845 585M1770 670L1875 940" /></g>
      <g fill="#e4e8f5" stroke="#666" strokeWidth="2"><path d="M1842 270l35 34-35 35-35-35zM1842 583l35 34-35 35-35-35z" /></g>
      <path d="M1806 315l-40 52M1816 325l-40 52M1806 630l-40 40M1816 640l-40 40" stroke="#777" strokeWidth="2" />
      {[82, 370, 668].map((y, n) => (
        <g key={n}>
          <path d={`M1712 ${y + 15}L1755 ${y}L1832 ${y + 190}L1800 ${y + 207}L1778 ${y + 203}z`} fill="#2f3336" />
          <path d={`M1724 ${y + 12}L1765 ${y}L1834 ${y + 190}L1800 ${y + 205}z`} fill="#555b5e" />
          {[["JS3", "JS4", "JS5", "JS6"], ["JS7", "JS8", "JS9", "JS10"], ["JS11", "JS12", "JS13", "JS14"]][n].map((t, i) => (
            <text key={t} x={1756 + i * 17} y={y + 36 + i * 47} fontSize="14" fontWeight="700" textAnchor="middle" fill="#111" transform={`rotate(-24 ${1756 + i * 17} ${y + 36 + i * 47})`}>{t}</text>
          ))}
        </g>
      ))}
      {/* long side strips */}
      <path d="M262 114L300 116L314 122V930L300 942H262z" fill="#373c40" /><rect x="262" y="116" width="38" height="208" fill="#5c6165" /><rect x="262" y="324" width="38" height="620" fill="#4b5053" />
      <path d="M262 974L280 960H314V1165L305 1184H262z" fill="#32373a" /><path d="M262 974H304V1185H262z" fill="#4b5053" />
      <VLabel x={277} y={155} t="IM2" step={20} f="#eee" /><VLabel x={277} y={256} t="IM1" step={20} f="#eee" />
      {([["GM1", 363], ["GM2", 468], ["GM3", 568], ["GM4", 670], ["GM5", 773], ["EM7", 880], ["EM8", 1020], ["EM9", 1120]] as [string, number][]).map(([t, y]) => <VLabel key={t} x={277} y={y} t={t} step={19} />)}
      <path d="M408 108H618L626 118V145H408z" fill="#3a4044" /><path d="M408 108H618V143H408z" fill="#5d6265" />
      <L x={460} y={129} w={84} s={12} f="#eee">Research Clinic</L><L x={564} y={129} w={72} s={12} f="#eee">คลินิกวิจัย</L>
      <rect x="762" y="116" width="208" height="54" fill="#54595c" /><path d="M762 114h208v4H762z" fill="#6f7b83" />
      <L x={798} y={149} w={40} s={16} f="#eee" b>NM3</L><L x={864} y={149} w={36} s={16} f="#ccc">BM7</L><L x={932} y={149} w={36} s={16} f="#ccc">BM7</L>
      <rect x="977" y="116" width="138" height="51" fill="#efefef" stroke="#777" strokeWidth="2.500" /><L x={1047} y={144} w={92} s={20} f="#111">CONTROL</L>
      {[781, 898, 1017].map((x) => [198, 212, 227].map((y) => <g key={x + "-" + y}><path d={`M${x} ${y}h108`} stroke="#bfb9a0" strokeWidth="7" /><path d={`M${x} ${y}h108`} stroke="#31437e" strokeWidth="8" strokeDasharray="8 1.500" /></g>))}
      <rect x="778" y="292" width="346" height="169" fill="#585d5f" stroke="#6a6f78" strokeWidth="2" />
      <L x={950} y={354} w={98} s={27} f="#fff">STAGE</L><L x={951} y={386} w={20} s={26} f="#fff">&amp;</L><L x={951} y={417} w={256} s={27} f="#fff">HIGHLIGHT ZONE</L>
      {[[753, 926], [960, 1132]].map(([a, b]) => <g key={a}><path d={`M${a} 492H${b - 4}L${b} 498V838H${a}z`} fill="#54658c" /><path d={`M${a} 497H${b - 4}V838H${a}z`} fill="#55595b" /><path d={`M${(a + b) / 2} 497H${b - 4}V838H${(a + b) / 2}z`} fill="#3f4345" opacity=".3" /></g>)}
      <L x={838} y={675} w={80} s={24} f="#fff">คอบช.</L><L x={1045} y={679} w={76} s={32} f="#fff">RUN</L>
      <g transform="translate(1020 0)">
        <path d="M252 116H568V152H252z" fill="#575c5e" /><path d="M252 116l5 5v31h-5z" fill="#333" />
        <L x={311} y={138} w={50} s={17} b f="#0c0c0c">BM1</L><L x={414} y={138} w={50} s={17} b f="#0c0c0c">BM2</L><L x={520} y={138} w={50} s={17} b f="#0c0c0c">BM3</L>
        <path d="M554 150H602V255H568L554 250z" fill="#33373c" /><path d="M568 150H602V255H568z" fill="#51565a" />
        <path d="M556 288H603V802H572L558 790z" fill="#33373c" /><path d="M570 290H603V803H572z" fill="#51565a" />
        <path d="M608 34L622 26H660V234H608z" fill="#33373c" /><path d="M622 26H660V234H622z" fill="#51565a" />
        <path d="M608 278H660V797H625L612 780z" fill="#33373c" /><path d="M624 280H660V797H626z" fill="#51565a" />
        <path d="M556 860H595L603 870V1184H570L556 1170z" fill="#33373c" /><path d="M570 868H603V1184H570z" fill="#51565a" />
        {([["BM4", 190], ["BM5", 330], ["BM6", 438], ["BM7", 538], ["BM8", 645], ["BM9", 742], ["BM10", 906], ["BM11", 1010], ["BM12", 1112]] as [string, number][]).map(([t, y]) => <VLabel key={t} x={586} y={y} t={t} step={17} />)}
        {([["JM2", 66], ["JM3", 163], ["JM4", 320], ["JM5", 418], ["JM6", 518], ["JM7", 615], ["JS15", 690], ["JS16", 752]] as [string, number][]).map(([t, y]) => <VLabel key={t} x={643} y={y} t={t} step={t.length > 3 ? 13 : 18} s={t.length > 3 ? 10 : 14} />)}
        <path d="M610 235v42M616 240q14 2 14 16q0 12-14 16" fill="none" stroke="#777" strokeWidth="2" /><circle cx="644" cy="256" r="5" fill="none" stroke="#777" strokeWidth="2" />
        <path d="M657 860H710L726 872V911H675L657 900z" fill="#33373c" /><path d="M675 874H726V911H675z" fill="#5c6164" /><L x={702} y={902} w={38} s={15} f="#111" b>JS17</L>
        <path d="M712 50L734 4L765 15L741 64z" fill="#3652a8" stroke="#22357a" strokeWidth="2" />
        <L x={748} y={77} w={110} s={12} b>ลงทะเบียน และ วช.</L>
        <path d="M452 1165L560 1163L568 1180V1215H470z" fill="#3a3f42" /><path d="M470 1182H568V1215H470z" fill="#5c6164" />
        <L x={521} y={1211} w={54} s={19} f="#0c0c0c" b>BM13</L>
        <path d="M415 98V44M448 50h40v20h-40zM432 64h16M450 50v40M457 50v40M464 50v40M471 50v40M478 50v40M450 70h58M525 62q4 0 6 16h14M566 50q10-20 16 0" stroke="#777" strokeWidth="2" fill="none" />
        <L x={750} y={1022} w={62} s={13} f="#777" b>WOMEN</L><L x={746} y={1178} w={32} s={13} f="#777" b>MEN</L>
        {NE.map((v) => <Booth key={v[0]} v={v} />)}
      </g>
      {NW.map((v) => <Booth key={v[0]} v={v} />)}
      <g transform="translate(1020 720)">{SE.map((v) => <Booth key={v[0]} v={v} />)}</g>
      <g transform="translate(0 720)">
        {SW.map((v) => <Booth key={v[0]} v={v} />)}
        <path d="M274 488L296 462H458L452 520H274zM456 488L462 460H1036V520H456zM1054 488V460H1506L1516 484V520H1054z" fill="#ff10b8" />
        <path d="M274 488L296 462H458L455 488zM456 488L462 460H1036V488zM1054 488V460H1506L1516 488z" fill="#ff22dc" />
        <path d="M458 462L453 520M274 488L296 462" stroke="#b50b88" strokeWidth="3" />
        {([["DM16", 387], ["DM15", 518], ["DM14", 632], ["DM13", 746], ["DM12", 860], ["DM11", 974], ["DM10", 1117], ["DM9", 1230], ["DM8", 1344], ["DM7", 1457]] as [string, number][]).map(([t, x]) => <L key={t} x={x} y={512} w={t.length > 3 ? 75 : 58} s={20} f="#fff" b>{t}</L>)}
        <L x={301} y={511} w={40} s={15} f="#fff" b>DS1</L>
        {[[432, 592], [582, 594], [1127, 594], [1300, 594]].map(([x, y]) => <L key={x} x={x} y={y} w={28} s={9} f="#555">STORE</L>)}
      </g>
    </g>
  );
}

/* ---- Theme legend on the left ---- */

const THEMES: { c: string; rim: string; icon: React.ReactNode; label?: string }[] = [
  { c: "#b68d5a", rim: "#dac6ae", label: "งานวิจัยและนวัตกรรมเพื่อความมั่นคง", icon: (
    <g><path d="M0 19l8 6 6-6 8-5 6-4 8-1 5-3 5-6v24l-7 8-4 6-4 4-6 3-5-1L7 32 8 27 0 21z" fill="#fff" /><path d="M41 0L26 9 34 10 42 1zM0 21v12l7 2 2-7zM46 25v21H30l8-8 4-8z" fill="#b68d5a" /><path d="M2 0l14 12" stroke="#fff" strokeWidth="1.500" /><path d="M20 20q5-3 8 0l10 9M14 29l4-5M17 33l4-5M21 36l4-5M25 39l3-4M30 31l5 5M27 34l4 4" stroke="#b68d5a" strokeWidth="1.600" fill="none" /></g>) },
  { c: "#0bb9e0", rim: "#85dcef", icon: (
    <g fill="none" stroke="#fff"><path d="M31 9A17 17 0 1 0 38 15" strokeWidth="4" /><path d="M21 3l7 5-6 6z" fill="#fff" stroke="none" /><path d="M40 4L21 18l-2 7 5 1-18 16 24-17 2-7-6-1L40 4z" fill="#fff" stroke="#0bb9e0" strokeWidth=".8" /><path d="M6 42l6-6" strokeWidth="2" /></g>) },
  { c: "#8cc540", rim: "#c5e29f", icon: (
    <g fill="#fff"><path d="M0 13Q18 26 24 46Q6 38 0 20z" /><path d="M20 3Q30 18 24 36Q14 18 20 3z" /><path d="M28 22Q29 10 42 7Q40 15 28 22z" /></g>) },
  { c: "#f4db0e", rim: "#f9ec84", icon: (
    <g fill="none" stroke="#fff"><path d="M3 12Q24-3 40 14Q48 30 34 40Q26 45 18 43" strokeWidth="2.200" /><circle cx="25" cy="12" r="2.500" fill="#fff" stroke="none" /><path d="M14 12l3 5 7 3 11-5-6 9 1 14-3 0-3-9-3 11-4 0 3-18z" fill="#fff" stroke="none" /></g>) },
  { c: "#f78c35", rim: "#fbc699", icon: (
    <g fill="#fff"><path d="M34 8h8v5l4 1v8q-24-4-24 18l2 6H13v-4H8v-8h6l2-8-2-4 6-6 4 2 10-5z" /><path d="M22 46q-4-24 24-24v24z" fill="#f78c35" /></g>) },
  { c: "#a8aaad", rim: "#d4d5d6", icon: (
    <g fill="#fff"><circle cx="14" cy="13.500" r="7.500" /><circle cx="32" cy="14" r="8.500" /><circle cx="14.500" cy="32.500" r="8.500" /><circle cx="33.500" cy="33.500" r="7.500" /><path d="M14 24q8 0 10-9l6 8q-7 1-9 10z" /></g>) },
  { c: "#ee018c", rim: "#f87fc4", icon: (
    <g fill="#fff"><path d="M0 13L9.500 5.500 20 17l7.500-8L37 19l4.500-6L46 18v5l-4.500-5L37 24l-9.500-9L20 23 9.500 13 0 22z" /><path d="M6 26h6v11H6zM25 25h5v10h-5zM40 25h4v7h-4z" /></g>) },
  { c: "#8a60a8", rim: "#c4afd4", icon: (
    <g fill="#fff"><path d="M23 9l12 6-12 7-12-7zM10 17l12 7v13l-12-6zM36 17l-12 7v13l12-6z" /><path d="M8 12Q18 2 31 7M40 14q5 13-6 23M20 42Q6 38 4 25" fill="none" stroke="#fff" strokeWidth="1.700" /><path d="M29 3l6 5-7 2zM31 34l1 7 5-4zM1 26l4-6 4 6z" /></g>) },
  { c: "#f8c0d8", rim: "#fbdfeb", label: "งานวิจัยและนวัตกรรมเพื่อการแพทย์และสาธารณสุข", icon: (
    <g fill="none" stroke="#fff"><circle cx="23" cy="24" r="18" strokeWidth="3" /><path d="M23 37Q9 27 10 19T19 13L23 17L27 13Q35 11 36 19T23 37z" fill="#fff" /><path d="M12 26h9l2-4 2 7 2-9 2 6h8" stroke="#f8c0d8" strokeWidth="1.200" /></g>) },
];

function Legend() {
  return (
    <div className="absolute left-[30px] top-[99px] flex h-[772px] w-[430px] flex-col gap-[7.350px] bg-linear-to-r from-[#d0a8ec]/10 to-[#e0b8ec]/8">
      {THEMES.map((t, i) => (
        <div key={i} className="relative flex h-[78px] shrink-0 items-center">
          <div className={"ml-[39px] flex h-[56px] items-center rounded-r-full bg-white pl-[53px] pt-[2px] " + (t.label ? "w-[391px]" : "w-[120px]")}>
            {t.label && <span style={{ color: t.c }} className="text-[24px] leading-none"><Fit w={i ? 311 : 308}>{t.label}</Fit></span>}
          </div>
          <svg viewBox="0 0 84 78" className="absolute left-0 top-0 h-[78px] w-[84px]">
            <circle cx="44.500" cy="39" r="38.800" fill={t.rim} />
            <circle cx="39" cy="39" r="39" fill="#fff" />
            <clipPath id={"tile" + i}><rect width="46" height="46" rx="8" /></clipPath>
            <g transform="translate(16 16)" clipPath={`url(#tile${i})`}><rect width="46" height="46" fill={t.c} />{t.icon}</g>
          </svg>
        </div>
      ))}
    </div>
  );
}

function InfoPanel() {
  return (
    <div className="absolute left-[114px] top-[150px] flex h-[674px] w-[841px] flex-col bg-[#e4e4e4] pl-[31px] font-medium text-black">
      <div className="mt-[6px] flex h-[46px] items-center text-[34px]"><Fit w={100}>THEME</Fit><Fit w={9} className="ml-[10px]">:</Fit><Fit w={25} className="ml-[9px]">H</Fit><Fit w={535} className="ml-[7px]">งานวิจัยและนวัตกรรมเพื่อเศรษฐกิจดิจิทัล</Fit></div>
      <div className="mt-[1px] flex h-[46px] items-center text-[34px]"><Fit w={121}>และข้อมูล</Fit></div>
      <div className="mt-[11px] flex h-[46px] items-center text-[34px]"><Fit w={166}>HL 1 - HL 3</Fit></div>
      <div className="mt-[24px] flex h-[42px] items-center text-[26px]"><Fit w={38} className="mr-[16px]">HL1</Fit><Fit w={401}>มหาวิทยาลัยเทคโนโลยีพระจอมเกล้าธนบุรี</Fit></div>
      <div className="flex h-[41px] items-center text-[26px]"><Fit w={41} className="mr-[17px]">HL2</Fit><Fit w={172}>กรมอุตุนิยมวิทยา</Fit></div>
      <div className="flex h-[41px] items-center text-[26px]"><Fit w={41} className="mr-[17px]">HL3</Fit><Fit w={300}>มหาวิทยาลัยราชภัฏกาญจนบุรี</Fit></div>
    </div>
  );
}

function GameView() {
  return (
    <div className="flex h-[909px] shrink-0 bg-[#313131]">
      <div className="relative mx-[152px] h-[909px] w-[1616px] shrink-0 overflow-hidden bg-[radial-gradient(ellipse_farthest-corner_at_center,#fdfdff_0%,#f8f9fd_28%,#e6e9f5_52%,#d3daee_74%,#a8b5df_100%)] font-['Noto_Sans_Thai','Open_Sans',sans-serif]">
        <div className="absolute left-11 top-[33px] text-[36px] font-medium leading-[48px] text-white"><Fit w={514}>สัมผัสที่หน้าจอเพื่อดูรายละเอียดเพิ่มเติม</Fit></div>
        <svg viewBox="152 109 1616 909" className="absolute inset-0 h-[909px] w-[1616px] font-['Liberation_Sans','Noto_Sans_Thai',sans-serif]">
          <SuitesPlan />
          <FoyerPlan />
          <HallPlan />
          <circle cx="1011" cy="986" r="1" fill="#99a" />
        </svg>
        <Legend />
        <InfoPanel />
        <button className="absolute left-[18px] top-[834px] flex h-[65px] w-[171px] justify-center rounded-[4px] border border-[#8b8b8f] bg-[#f5f5f5] pr-[2px] pt-[3px] text-[34px] font-medium leading-[52px] text-[#323232]"><Fit w={74}>EXIT</Fit></button>
      </div>
    </div>
  );
}

function StatusBar() {
  return (
    <div className="flex h-[22px] shrink-0 items-center justify-end border-t border-[#5a5a5a] bg-[#828282] pr-[27px] font-['DejaVu_Sans',sans-serif] text-[10px] text-[#111]">
      <div className="flex h-[18px] w-[186px] items-center border border-l-2 border-[#5d5d5d] border-l-[#4a7bd8] bg-[#8f8f8f] pl-7"><Fit w={129}>Bake paused in play mode</Fit></div>
    </div>
  );
}

const APPS: { icon: React.ReactNode; on?: boolean }[] = [
  { icon: <svg viewBox="0 0 22 20" className="h-5 w-[22px]"><path d="M0 1h9l1 2h11v15H0z" fill="#fde08a" /><path d="M0 1h9v2H0z" fill="#f3c12c" /><path d="M4 10h14v9h-4v-4H8v4H4z" fill="#36a9e1" /></svg> },
  { icon: <svg viewBox="0 0 22 22" className="h-[22px] w-[22px]"><circle cx="11" cy="11" r="11" fill="#fbc634" /><path d="M1.500 5.500A11 11 0 0 1 20.500 5.500H11L6 13z" fill="#e0493b" /><path d="M1.500 5.500L7 14l4 2-2 5.900A11 11 0 0 1 1.500 5.500z" fill="#23a05a" /><circle cx="11" cy="11" r="5.200" fill="#fff" /><circle cx="11" cy="11" r="4.200" fill="#4285f4" /></svg> },
  { icon: <UnityMark className="h-[22px] w-[22px]" dark="#141414" />, on: true },
  { icon: <svg viewBox="0 0 24 24" className="h-6 w-6"><path d="M18 0l6 2v20l-6 2L0 19l18 2z" fill="#865fc5" /><path d="M1 7l2-1 4 4 6-5 2 1v11l-2 1-6-5-4 4-2-1zM3 9v5l2-2.500zM13 8.500L9 11.500l4 3z" fill="#865fc5" fillRule="evenodd" /></svg> },
  { icon: <svg viewBox="0 0 22 22" className="h-[21px] w-[22px]"><rect width="22" height="22" fill="#4a0202" stroke="#7a0c0c" /><path d="M16 5.500q-4 0-5 5.500-1 5-5 5.500M9 11h5" stroke="#fff" strokeWidth="2.600" fill="none" /></svg> },
  { icon: <svg viewBox="0 0 24 24" className="h-6 w-6"><rect width="24" height="24" rx="4" fill="#00b900" /><path d="M12 4c5 0 9 3 9 7 0 3-3 6-9 10v-3c-5 0-9-3-9-7s4-7 9-7z" fill="#fff" /><text x="12" y="13.500" fontSize="5.500" fontWeight="700" textAnchor="middle" textLength="13" lengthAdjust="spacingAndGlyphs" fill="#00b900">LINE</text></svg> },
];

function Taskbar() {
  return (
    <div className="flex h-10 shrink-0 bg-[#08090b] font-['Open_Sans',sans-serif] text-[12px] text-white">
      <div className="flex w-[147px] items-center">
        <svg viewBox="0 0 16 16" className="ml-4 h-4 w-4" fill="#fff"><path d="M0 2.200L6.500 1.300V7.500H0zM7.500 1.100L16 0v7.500H7.500zM0 8.500h6.500v6.200L0 13.800zM7.500 8.500H16V16l-8.500-1.100z" /></svg>
        <svg viewBox="0 0 16 16" className="ml-8 h-4 w-4" fill="none" stroke="#fff" strokeWidth="1.400"><circle cx="10.500" cy="5.500" r="4.800" /><path d="M7 9L.5 15.500" /></svg>
        <svg viewBox="0 0 16 16" className="ml-8 h-4 w-4" fill="none" stroke="#fff" strokeWidth="1.200"><path d="M.5 0v3.500h10V0M.5 16v-3.500h10V16M.5 5.500h10v5H.5zM14 0v4M14 9v7" /><path d="M13 5h3v3h-3z" fill="#fff" stroke="none" /></svg>
      </div>
      {APPS.map((a, i) => (
        <div key={i} className={"flex w-[49px] flex-col items-center " + (a.on ? "bg-[#38393b]" : "")}>
          <div className="flex h-[38px] items-center pr-[2px]">{a.icon}</div>
          <div className={"h-[2px] bg-[#76b9ed] " + (a.on ? "w-full" : "w-10")} />
        </div>
      ))}
      <div className="ml-auto flex items-center">
        <svg viewBox="0 0 16 16" className="h-4 w-4" fill="none" stroke="#fff" strokeWidth="1.300"><circle cx="11" cy="3.500" r="2.800" /><path d="M7 10q0-3.500 4-3.500t4 4M1 15.500q0-3.500 3.500-3.500T8 15.500" /><circle cx="4.500" cy="9" r="2.500" /></svg>
        <svg viewBox="0 0 12 8" className="ml-[22px] h-2 w-3" fill="none" stroke="#fff" strokeWidth="1.400"><path d="M.5 7L6 1.500 11.500 7" /></svg>
        <svg viewBox="0 0 16 16" className="ml-[10px] h-4 w-4"><rect width="16" height="16" fill="#00b900" /><path d="M8 2c4 0 6 2 6 5s-2 5-6 6c-4 0-6-2-6-6s2-5 6-5z" fill="#fff" /><rect x="9" y="9" width="7" height="7" fill="#e8452c" /><path d="M10.500 15v-5l4 5v-5" stroke="#fff" fill="none" /></svg>
        <svg viewBox="0 0 13 13" className="ml-[11px] h-[13px] w-[13px]" fill="none" stroke="#ddd" strokeWidth="1.200"><path d="M.5 12Q1 1 12.500 .8M3.500 12.500Q4 4.500 12.500 4M6.500 12.500Q7 8 12.500 7.500" /><circle cx="11" cy="11" r="1.600" fill="#fff" /></svg>
        <svg viewBox="0 0 16 13" className="ml-2 h-[13px] w-4" fill="none" stroke="#fff" strokeWidth="1.100"><path d="M.5 4.500h2.500L6.500 1v11L3 8.500H.5zM8.500 4.500q1.500 2 0 4M10.800 3q2.500 3.500 0 7" /><path d="M13.200 1.500q3.500 5 0 10" stroke="#888" /></svg>
        <Fit w={23} className="ml-[9px]">ENG</Fit>
        <div className="-mt-[1px] ml-[15px] flex w-[46px] flex-col items-center leading-[18px]"><Fit w={27}>17:07</Fit><Fit w={45}>2/8/2561</Fit></div>
        <div className="relative ml-[21px] h-[30px] w-6">
          <svg viewBox="0 0 16 16" className="mt-[6px] h-4 w-4"><path d="M0 0h16v12H7l-3 4v-4H0z" fill="#fff" /><path d="M3 3.500h10M3 6h10M3 8.500h6" stroke="#111" /></svg>
          <div className="absolute left-2 top-[12px] flex h-4 w-4 items-center justify-center rounded-full border border-[#777] bg-[#2b2b2d] text-[11px] font-semibold">2</div>
        </div>
        <div className="ml-[13px] mr-1 h-10 w-px bg-[#666]" />
      </div>
    </div>
  );
}

export default function App() {
  return (
    <div className="flex h-[1080px] w-[1920px] flex-col overflow-hidden bg-[#313131]">
      <TitleBar />
      <Toolbar />
      <GameTabs />
      <GameView />
      <StatusBar />
      <Taskbar />
    </div>
  );
}
